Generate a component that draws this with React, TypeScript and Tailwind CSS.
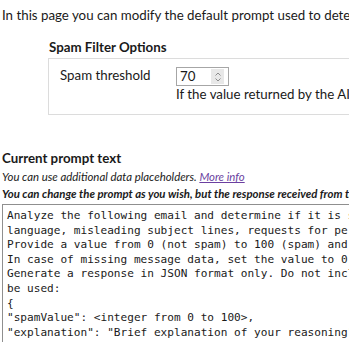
import React from 'react';

const PROMPT = `Analyze the following email and determine if it is spam. Consider factors such as suspicious
language, misleading subject lines, requests for personal information and unknown senders.
Provide a value from 0 (not spam) to 100 (spam) and a short explanation.
In case of missing message data, set the value to 0.
Generate a response in JSON format only. Do not include any other text. The following format must
be used:
{
"spamValue": <integer from 0 to 100>,
"explanation": "Brief explanation of your reasoning"
}`;

const App: React.FC = () => {
  return (
    <div className="w-[349px] h-[342px] overflow-hidden bg-white text-[#1a1a1a] font-['Lato','Open_Sans',sans-serif] whitespace-nowrap">
      <p className="pl-[2px] pt-[6px] text-[13.3px] leading-[18px]">
        In this page you can modify the default prompt used to determine whether a message is spam.
      </p>

      <div className="ml-[48px] mt-[14px]">
        <h3 className="pl-[1px] text-[13.3px] leading-[18px] font-bold">Spam Filter Options</h3>
        <div className="mt-[2px] w-[400px] h-[57px] border border-[#dcdcdc] flex pl-[11px] pt-[7px]">
          <label className="w-[116px] shrink-0 text-[13.3px] leading-[18px]">Spam threshold</label>
          <div className="flex flex-col pt-px">
            <div className="w-[53px] h-[19px] border border-[#a6a6a6] flex items-center pl-[3px] pr-[4px]">
              <span className="text-[13.3px] leading-[17px] flex-1">70</span>
              <span className="w-[13px] h-[15px] bg-[#e8e8e8] flex items-center justify-center text-[#8c8c8c]">
                <svg width="8" height="12" viewBox="0 0 8 12" fill="none" stroke="currentColor" strokeWidth="1">
                  <path d="M1.5 4.5 L4 2 L6.5 4.5" />
                  <path d="M1.5 7.5 L4 10 L6.5 7.5" />
                </svg>
              </span>
            </div>
            <span className="text-[13.3px] leading-[18px] -mt-[1px]">
              If the value returned by the AI is greater than or equal to this threshold, the message is spam.
            </span>
          </div>
        </div>
      </div>

      <h3 className="pl-[2px] mt-[34px] text-[13.3px] leading-[18px] font-bold">Current prompt text</h3>
      <p className="pl-[2px] mt-[2px] text-[11.4px] leading-[16px] italic">
        You can use additional data placeholders.{' '}
        <a href="#" className="text-[#6b3fa0] underline">More info</a>
      </p>
      <p className="pl-[2px] mt-[1px] text-[11.4px] leading-[16px] italic font-bold">
        You can change the prompt as you wish, but the response received from the AI must be in the format below.
      </p>
      <div className="ml-[2px] mt-[2px] w-[400px] border border-[#8f8f8f] border-r-0 pl-[4px] pt-[4px]">
        <pre className="font-['DejaVu_Sans_Mono',monospace] text-[11.1px] leading-[14.6px] text-[#1a1a1a]">{PROMPT}</pre>
      </div>
    </div>
  );
};

export default App;
